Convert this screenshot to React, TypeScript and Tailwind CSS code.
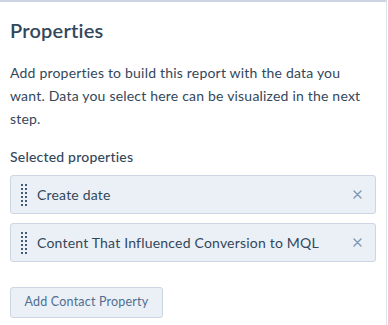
import React from "react";

function Grip() {
  return (
    <svg width="6" height="22" viewBox="0 0 6 22" className="shrink-0">
      {[0, 1, 2, 3, 4, 5].map((r) =>
        [0, 1].map((c) => (
          <rect key={`${r}-${c}`} x={c * 4} y={r * 4} width="2" height="2" fill="#425b76" />
        ))
      )}
    </svg>
  );
}

function XIcon() {
  return (
    <svg width="9" height="9" viewBox="0 0 9 9" className="shrink-0">
      <path d="M1 1L8 8M8 1L1 8" stroke="#7c98b6" strokeWidth="1.4" strokeLinecap="round" />
    </svg>
  );
}

function Pill({ label }: { label: string }) {
  return (
    <div className="flex h-[39px] items-center rounded-[3px] border border-[#cbd6e2] bg-[#eaf0f6] pl-[10px] pr-[13px]">
      <Grip />
      <span className="ml-[10px] flex-1 text-[14px] tracking-[0.2px] text-[#33475b]">{label}</span>
      <XIcon />
    </div>
  );
}

export default function App() {
  return (
    <div
      className="h-[325px] w-[388px] overflow-hidden bg-white"
      style={{ fontFamily: "Lato, 'Noto Sans', sans-serif" }}
    >
      <div className="h-[325px] w-[387px] border-t-2 border-r border-[#cbd6e2] border-r-[#dfe3eb] px-[10px]">
        <h1 className="mt-[14px] text-[20px] font-semibold leading-[28px] tracking-[0.2px] text-[#33475b]">Properties</h1>
        <p className="mt-[17px] text-[14px] leading-[23px] tracking-[0.2px] text-[#33475b]">
          Add properties to build this report with the data you want. Data you select here can be visualized in the next step.
        </p>
        <div className="mt-[17px] text-[14px] font-medium leading-[20px] tracking-[0.2px] text-[#33475b]">Selected properties</div>
        <div className="mt-[8px] flex flex-col gap-[9px]">
          <Pill label="Create date" />
          <Pill label="Content That Influenced Conversion to MQL" />
        </div>
        <button className="mt-[25px] h-[31px] w-[153px] rounded-[3px] border border-[#cbd6e2] bg-[#eaf0f6] text-[12.5px] tracking-[0.2px] text-[#506e91]">
          Add Contact Property
        </button>
      </div>
    </div>
  );
}
